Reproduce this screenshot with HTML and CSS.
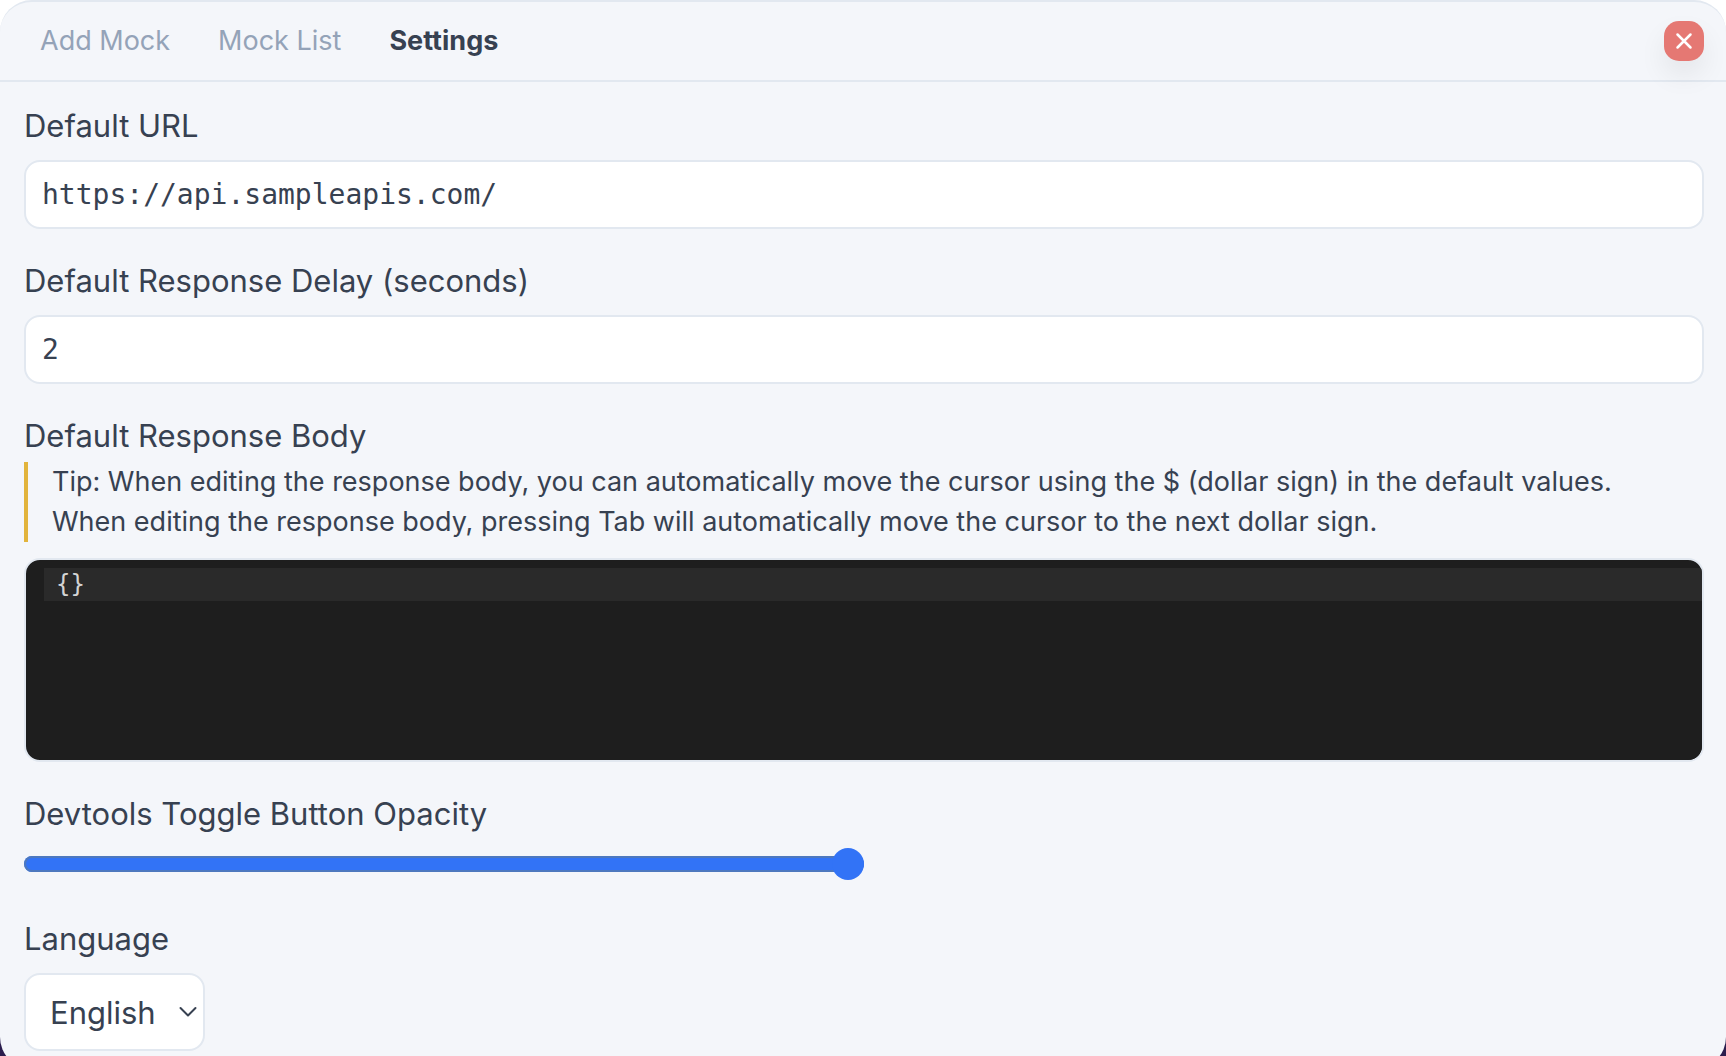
FILE: index.html
```html
<!DOCTYPE html>
<html lang="en">
<head>
<meta charset="utf-8">
<meta name="viewport" content="width=device-width, initial-scale=1">
<title>Settings</title>
<link rel="stylesheet" href="styles.css">
</head>
<body>
<div class="page">
  <main class="panel">
    <header class="header">
      <nav class="tabs">
        <button class="tab" type="button">Add Mock</button>
        <button class="tab" type="button">Mock List</button>
        <button class="tab tab-active" type="button">Settings</button>
      </nav>
      <button class="close" type="button" aria-label="Close">
        <svg width="18" height="18" viewBox="0 0 18 18" fill="none" stroke="currentColor" stroke-width="2.500" stroke-linecap="round"><path d="M2.500 2.500l13 13M15.500 2.500l-13 13"/></svg>
      </button>
    </header>
    <form class="settings">
      <div class="field">
        <label class="label" for="url">Default URL</label>
        <input class="input" id="url" type="text" value="https://api.sampleapis.com/" spellcheck="false">
      </div>
      <div class="field">
        <label class="label" for="delay">Default Response Delay (seconds)</label>
        <input class="input" id="delay" type="text" inputmode="numeric" value="2">
      </div>
      <div class="field field-body">
        <label class="label" for="body">Default Response Body</label>
        <p class="tip">Tip: When editing the response body, you can automatically move the cursor using the $ (dollar sign) in the default values.<br>When editing the response body, pressing Tab will automatically move the cursor to the next dollar sign.</p>
        <div class="editor">
          <textarea class="code" id="body" spellcheck="false">{}</textarea>
        </div>
      </div>
      <div class="field">
        <label class="label" for="opacity">Devtools Toggle Button Opacity</label>
        <input class="slider" id="opacity" type="range" min="0" max="100" value="100">
      </div>
      <div class="field">
        <label class="label" for="language">Language</label>
        <div class="select-wrap">
          <select class="select" id="language"><option>English</option></select>
          <svg class="chevron" width="18" height="12" viewBox="0 0 18 12" fill="none" stroke="currentColor" stroke-width="2" stroke-linecap="round" stroke-linejoin="round"><path d="M1.500 2l7.500 7.500 7.500-7.500"/></svg>
        </div>
      </div>
    </form>
  </main>
</div>
</body>
</html>
```
FILE: styles.css
```css
* {
  box-sizing: border-box;
}

body {
  margin: 0;
  background: #fff;
  color: #374151;
  font-family: Inter, "Liberation Sans", sans-serif;
}

button,
input,
select,
textarea {
  margin: 0;
  color: inherit;
  font-family: inherit;
}

.page {
  height: 100vh;
  overflow: hidden;
  background: linear-gradient(#fff 50%, #2b1d4d 50%);
}

.panel {
  border-top: 2px solid #e2e8f0;
  border-radius: 32px;
  background: #f4f6fa;
}

.header {
  display: flex;
  align-items: center;
  justify-content: space-between;
  height: 80px;
  padding: 0 22px 0 40px;
  border-bottom: 2px solid #e2e8f0;
}

.tabs {
  display: flex;
  gap: 48px;
}

.tab {
  padding: 0;
  border: 0;
  background: none;
  color: #94a3b8;
  font-size: 27px;
  line-height: 40px;
}

.tab-active {
  color: #374151;
  font-weight: 700;
}

.close {
  display: grid;
  place-items: center;
  width: 40px;
  height: 40px;
  padding: 0;
  border: 0;
  border-radius: 15px;
  background: #e57873;
  color: #fff;
  box-shadow: 0 14px 28px rgba(0, 0, 0, 0.07);
}

.settings {
  display: flex;
  flex-direction: column;
  gap: 28px;
  padding: 20px 22px 18px 24px;
}

.field {
  display: flex;
  flex-direction: column;
  align-items: flex-start;
  gap: 10px;
}

.field-body {
  gap: 0;
}

.label {
  font-size: 31px;
  line-height: 48px;
}

.input {
  width: 100%;
  height: 69px;
  padding: 0 16px;
  border: 2px solid #e2e8f0;
  border-radius: 16px;
  background: #fff;
  font-family: "DejaVu Sans Mono", monospace;
  font-size: 28px;
}

.tip {
  margin: 2px 0 16px;
  padding-left: 24px;
  border-left: 4px solid #e2b43c;
  font-size: 27px;
  line-height: 40px;
}

.editor {
  width: 100%;
  height: 204px;
  overflow: hidden;
  padding: 8px 0 0 18px;
  border: 2px solid #e2e8f0;
  border-radius: 16px;
  background: #1e1e1e;
}

.code {
  display: block;
  width: 100%;
  height: 100%;
  padding: 0 12px;
  border: 0;
  outline: 0;
  resize: none;
  background: linear-gradient(#2a2a2a 33px, #1e1e1e 33px);
  color: #d4d4d4;
  font-family: "DejaVu Sans Mono", monospace;
  font-size: 24px;
  line-height: 33px;
}

.slider {
  appearance: none;
  width: 50%;
  height: 32px;
  margin-bottom: 7px;
  background: none;
}

.slider::-webkit-slider-runnable-track {
  height: 16px;
  border-radius: 8px;
  background: #3273f6;
  box-shadow: inset 0 0 0 2px #4d78be;
}

.slider::-webkit-slider-thumb {
  appearance: none;
  width: 32px;
  height: 32px;
  margin-top: -8px;
  border-radius: 50%;
  background: #3273f6;
}

.select-wrap {
  display: grid;
  align-items: center;
  justify-items: end;
}

.select,
.chevron {
  grid-area: 1 / 1;
}

.select {
  appearance: none;
  height: 78px;
  padding: 0 47px 0 24px;
  border: 2px solid #e2e8f0;
  border-radius: 16px;
  background: #fff;
  font-size: 31px;
}

.chevron {
  margin-right: 8px;
  pointer-events: none;
}
```
